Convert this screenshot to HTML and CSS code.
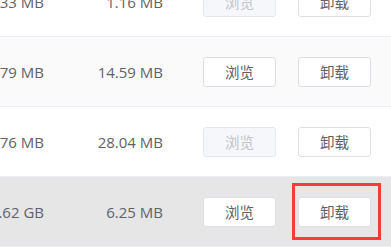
FILE: index.html
```html
<!DOCTYPE html>
<html>
<head>
<meta charset="utf-8">
<link rel="stylesheet" href="styles.css">
</head>
<body>
<div class="table">
  <div class="row">
    <div class="c1">5.33 MB</div>
    <div class="c2">1.16 MB</div>
    <button class="btn disabled">浏览</button>
    <button class="btn">卸载</button>
  </div>
  <div class="row striped">
    <div class="c1">5.79 MB</div>
    <div class="c2">14.59 MB</div>
    <button class="btn">浏览</button>
    <button class="btn">卸载</button>
  </div>
  <div class="row">
    <div class="c1">5.76 MB</div>
    <div class="c2">28.04 MB</div>
    <button class="btn disabled">浏览</button>
    <button class="btn">卸载</button>
  </div>
  <div class="row hover">
    <div class="c1">1.62 GB</div>
    <div class="c2">6.25 MB</div>
    <button class="btn">浏览</button>
    <span class="mark-wrap"><button class="btn">卸载</button><span class="mark"></span></span>
  </div>
</div>
</body>
</html>
```
FILE: styles.css
```css
html, body {
  margin: 0;
  padding: 0;
  background: #fff;
  overflow: hidden;
}
body {
  width: 391px;
  height: 248px;
  font-family: "Open Sans", "Noto Sans CJK SC", sans-serif;
}
.table {
  margin-top: -33px;
  margin-left: -60px;
}
.row {
  display: flex;
  align-items: center;
  height: 69px;
  border-bottom: 1px solid #ebeef5;
  color: #606266;
  font-size: 15px;
}
.striped { background: #fafafa; }
.hover { background: #e6e6e6; }
.c1 {
  width: 104px;
  text-align: right;
  white-space: nowrap;
}
.c2 {
  width: 119px;
  text-align: right;
  white-space: nowrap;
}
.btn {
  box-sizing: border-box;
  width: 73px;
  height: 30px;
  margin-left: 40px;
  padding: 0;
  border: 1px solid #dcdfe6;
  border-radius: 3px;
  background: #fff;
  color: #606266;
  font-family: "Noto Sans CJK SC", sans-serif;
  font-size: 14.5px;
  line-height: 28px;
}
.btn + .btn, .btn + .mark-wrap { margin-left: 22px; }
.btn.disabled {
  color: #c0c4cc;
  background: #f5f7fa;
  border-color: #e4e7ed;
}
.mark-wrap {
  position: relative;
  display: flex;
}
.mark-wrap .btn { margin-left: 0; }
.mark {
  position: absolute;
  left: -6px;
  top: -14px;
  width: 83px;
  height: 51px;
  border: 3px solid #f53b3b;
}
```
